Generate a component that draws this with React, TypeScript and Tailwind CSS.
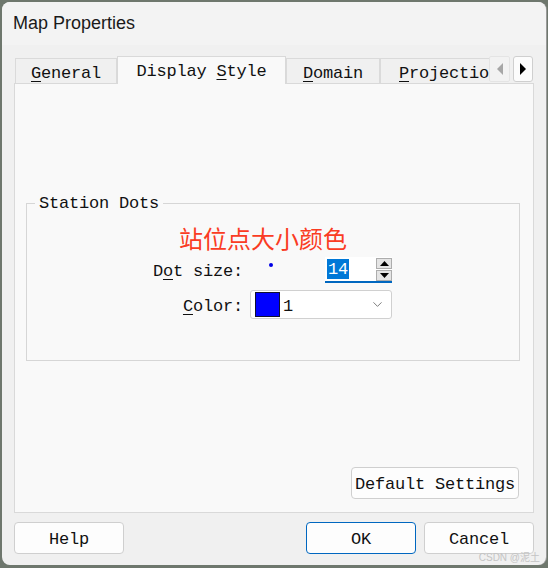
import React from 'react';
import { ChevronDown } from 'lucide-react';

const mono = "font-['Liberation_Mono','DejaVu_Sans_Mono',monospace] text-[17px] tracking-[-0.2px] text-[#111] whitespace-pre";

const tabs = [
  { key: 'G', rest: 'eneral', pre: '', w: 'w-[102px]', active: false },
  { key: 'S', rest: 'tyle', pre: 'Display ', w: 'w-[169px]', active: true },
  { key: 'D', rest: 'omain', pre: '', w: 'w-[94px]', active: false },
];

const Triangle = ({ dir, color }: { dir: 'up' | 'down' | 'left' | 'right'; color: string }) => {
  const pts = {
    up: '0,5 4.5,0 9,5',
    down: '0,0 9,0 4.5,5',
    left: '6,0 6,12 0,6',
    right: '0,0 0,12 6,6',
  }[dir];
  const horiz = dir === 'left' || dir === 'right';
  return (
    <svg width={horiz ? 6 : 9} height={horiz ? 12 : 5} viewBox={horiz ? '0 0 6 12' : '0 0 9 5'}>
      <polygon points={pts} fill={color} />
    </svg>
  );
};

const Button = ({ children, className = '' }: { children: React.ReactNode; className?: string }) => (
  <button className={`h-[32px] rounded-[4px] border bg-[#fdfdfd] flex items-center justify-center pt-[4px] ${mono} ${className}`}>
    {children}
  </button>
);

const App = () => {
  return (
    <div className="relative w-[548px] h-[568px] bg-[#6e776d] pt-[2px] pl-[2px] overflow-hidden">
      <div className="w-[544px] h-[563px] rounded-[8px] bg-[#f0f0f0] overflow-hidden shadow-[1px_0_0_#9a9a9a]">
        {/* title bar */}
        <div className="h-[43px] bg-[#f3f3f3] flex items-center pl-[11px] font-['Liberation_Sans',Arial,sans-serif] text-[18px] text-[#1a1a1a]">
          Map Properties
        </div>

        <div className="px-[12px]">
          {/* tab strip */}
          <div className="mt-[11px] h-[27px] flex items-end relative z-10">
            <div className="w-[1px]" />
            {tabs.map((t) =>
              t.active ? (
                <div
                  key={t.key}
                  className={`${t.w} h-[28px] -mb-px border-t border-l border-r border-[#d9d9d9] bg-[#f9f9f9] flex items-center justify-center pt-[2px] ${mono}`}
                >
                  <span>
                    {t.pre}
                    <u className="underline-offset-[3px]">{t.key}</u>
                    {t.rest}
                  </span>
                </div>
              ) : (
                <div
                  key={t.key}
                  className={`${t.w} h-[25px] border-t border-l border-r border-[#dadada] bg-[#f0f0f0] flex items-center justify-center pt-[5px] ${mono}`}
                >
                  <span>
                    <u className="underline-offset-[3px]">{t.key}</u>
                    {t.rest}
                  </span>
                </div>
              )
            )}
            <div className={`w-[109px] h-[25px] border-t border-l border-[#dadada] bg-[#f0f0f0] flex items-center pl-[18px] pt-[5px] ${mono}`}>
              <span>
                <u className="underline-offset-[3px]">P</u>rojectio
              </span>
            </div>
            <div className="w-[21px] h-[26px] mb-px border border-[#e4e4e4] bg-[#f2f2f2] rounded-[2px] flex items-center justify-center">
              <Triangle dir="left" color="#a6a6a6" />
            </div>
            <div className="ml-[3px] w-[20px] h-[26px] mb-px border border-[#cfcfcf] bg-[#fcfcfc] rounded-[3px] flex items-center justify-center">
              <Triangle dir="right" color="#000" />
            </div>
          </div>

          {/* tab page */}
          <div className="w-[520px] h-[430px] border border-[#d9d9d9] bg-[#f9f9f9] flex flex-col">
            <div className="relative ml-[11px] mt-[119px] w-[494px] h-[158px] border border-[#d6d6d6]">
              <span className={`absolute -top-[11px] left-[8px] px-[4px] bg-[#f9f9f9] leading-[20px] pt-[1px] ${mono}`}>
                Station Dots
              </span>

              <div className="mt-[22px] ml-[152px] h-[24px] leading-[24px] text-[24px] text-[#fa3c23] font-['Noto_Sans_CJK_SC',sans-serif]">
                站位点大小颜色
              </div>

              <div className="mt-[7px] ml-[119px] grid grid-cols-[100px_142px] gap-x-[4px] gap-y-[7px]">
                <div className={`h-[26px] flex items-center justify-end pt-[4px] pr-[3px] ${mono}`}>
                  <span>
                    D<u className="underline-offset-[3px]">o</u>t size:
                  </span>
                </div>
                <div className="h-[26px] flex items-center">
                  <div className="ml-[19px] w-[4px] h-[4px] rounded-full bg-[#0000e6] -mt-[10px]" />
                  <div className="ml-[52px] w-[67px] h-[26px] flex bg-white border-b-2 border-[#0067c0]">
                    <div className="w-[51px] flex items-center pl-[2px]">
                      <span className={`bg-[#0078d7] leading-[18px] px-[1px] pt-[2px] ${mono} !text-white`}>14</span>
                    </div>
                    <div className="w-[16px] flex flex-col pt-[1px] gap-[1px]">
                      <div className="h-[11px] border border-[#adadad] bg-[#e5e5e5] flex items-center justify-center">
                        <Triangle dir="up" color="#000" />
                      </div>
                      <div className="h-[11px] border border-[#adadad] bg-[#e5e5e5] flex items-center justify-center">
                        <Triangle dir="down" color="#000" />
                      </div>
                    </div>
                  </div>
                </div>

                <div className={`h-[29px] flex items-center justify-end pt-[4px] pr-[3px] ${mono}`}>
                  <span>
                    <u className="underline-offset-[3px]">C</u>olor:
                  </span>
                </div>
                <div className="h-[29px] border border-[#d0d0d0] rounded-[3px] bg-white flex items-center pl-[4px] pr-[6px]">
                  <div className="w-[25px] h-[25px] bg-[#0000ff] border border-[#101030]" />
                  <span className={`ml-[3px] pt-[4px] ${mono}`}>1</span>
                  <ChevronDown className="ml-auto w-[15px] h-[15px] text-[#5f5f5f]" strokeWidth={1.3} />
                </div>
              </div>
            </div>

            <div className="mt-[106px] flex justify-end pr-[14px]">
              <Button className="w-[168px] border-[#cfcfcf]">Default Settings</Button>
            </div>
          </div>

          {/* bottom buttons */}
          <div className="mt-[9px] flex justify-between">
            <Button className="w-[110px] border-[#cfcfcf]">Help</Button>
            <div className="flex gap-[8px]">
              <Button className="w-[110px] border-[#0067c0]">OK</Button>
              <Button className="w-[110px] border-[#cfcfcf]">Cancel</Button>
            </div>
          </div>
        </div>
      </div>

      <span className="absolute right-[8px] bottom-[3px] text-[10px] text-[#c4c4c4] font-['Liberation_Sans','Noto_Sans_CJK_SC',sans-serif]">
        CSDN @泥土
      </span>
    </div>
  );
};

export default App;
